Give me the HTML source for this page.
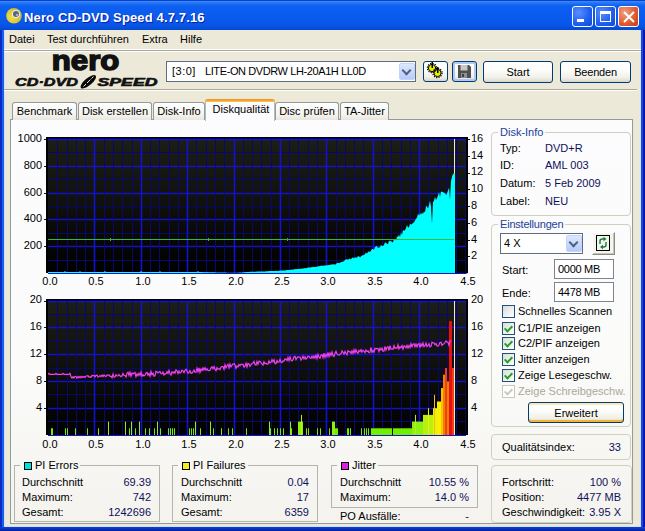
<!DOCTYPE html>
<html><head><meta charset="utf-8">
<style>
*{box-sizing:border-box}
html,body{margin:0;padding:0;width:645px;height:531px;overflow:hidden;background:#0831d9}
body{position:relative;font-family:"Liberation Sans",sans-serif;font-size:11px;color:#000}
.a{position:absolute}
.t{position:absolute;white-space:nowrap;font-size:11px;line-height:14px}
.t.r{text-align:right}
.t.c{width:40px;text-align:center}
#titlebar{position:absolute;left:0;top:0;width:645px;height:30px;
 background:linear-gradient(#0a3ed0 0px,#0a3ed0 1px,#3c8cf6 1px,#2474f4 3px,#0c60f0 6px,#0a5cee 14px,#0958ec 22px,#0652e2 27px,#0448d0 30px);
 border-radius:0}
#frame{position:absolute;left:0;top:30px;width:645px;height:501px;background:linear-gradient(90deg,#0a2cc4 0,#0a2cc4 2px,#1a5ef2 2px,#1a5ef2 4px,#0a50e0 4px,#0a50e0 641px,#1a48e0 641px,#1a48e0 643px,#0818a8 643px)}
#face{position:absolute;left:4px;top:30px;width:637px;height:497px;background:#ece9d8;border-left:1px solid #d0e0fa;border-right:1px solid #d0e0fa;border-bottom:1px solid #d0e0fa}
#bottomborder{position:absolute;left:0;top:527px;width:645px;height:4px;background:linear-gradient(#1040d8,#0020a0)}
.ttl{position:absolute;left:24px;top:10px;font:bold 13px "Liberation Sans",sans-serif;color:#fff;text-shadow:1px 1px 0 #0a1e9e;letter-spacing:0.14px}
.cbtn{position:absolute;top:6px;width:21px;height:21px;border:1px solid #fff;border-radius:3px;background:radial-gradient(circle at 30% 30%,#5a8dff,#1d5ef0 60%,#1445d0)}
.cbtn.x{background:radial-gradient(circle at 30% 30%,#f0a080,#e0582e 60%,#c43c18)}
.menu{position:absolute;top:32px}
.sep{position:absolute;height:2px;border-top:1px solid #aca899;border-bottom:1px solid #fff}
.combo{position:absolute;background:#fff;border:1px solid #5e6e7e}
.ddbtn{position:absolute;border-radius:2px;background:linear-gradient(#dde8ff,#b6cbf7);border:1px solid #c3d3fd}
.ddbtn:after{content:"";position:absolute;left:3px;top:3px;width:5px;height:5px;border-right:2px solid #4d6185;border-bottom:2px solid #4d6185;transform:rotate(45deg)}
.btn{position:absolute;border:1px solid #003c74;border-radius:3px;background:linear-gradient(#fff 0,#fdfdfb 40%,#f0efe7 80%,#d8d5c8 100%);text-align:center;line-height:19px}
.tab{position:absolute;top:102px;height:18px;border:1px solid #919b9c;border-bottom:none;border-radius:3px 3px 0 0;background:linear-gradient(#fff,#f4f3ee 70%,#e8e6dc);line-height:17px;text-align:center}
.tab.sel{top:99px;height:22px;background:#fcfcfe;border-top:none;line-height:21px;border-color:#b8bcbc;padding-left:2px}
.tab.sel:before{content:"";position:absolute;left:-1px;right:-1px;top:0;height:3px;background:linear-gradient(#e68b2c,#ffc73c);border-radius:3px 3px 0 0}
#panel{position:absolute;left:10px;top:119px;width:623px;height:405px;border:1px solid #919b9c;background:linear-gradient(#fcfcfe 0,#fbfbfa 60%,#f4f3ee 100%)}
.grp{position:absolute;border:1px solid #d0d0bf;border-radius:4px}
.gt{position:absolute;background:#fbfbfb;padding:0 2px;line-height:13px;color:#22409a}
.v{color:#10105a}
.cb{position:absolute;width:13px;height:13px;border:1px solid #1c5180;background:linear-gradient(135deg,#dcdcd7,#fff)}
.cb.on:after{content:"";position:absolute;left:3px;top:1px;width:3px;height:6px;border-right:2px solid #21a121;border-bottom:2px solid #21a121;transform:rotate(45deg)}
.cb.dis{border-color:#cac8bb;background:#fff}
.cb.dis:after{content:"";position:absolute;left:3px;top:1px;width:3px;height:6px;border-right:2px solid #cac8bb;border-bottom:2px solid #cac8bb;transform:rotate(45deg)}
.edit{position:absolute;background:#fff;border:1px solid #7c848e;line-height:19px;padding-left:3px;letter-spacing:-0.3px}
.sq{display:inline-block;width:8px;height:8px;border:1px solid #000;vertical-align:-1px;margin-right:3px;margin-left:2px}
</style></head>
<body>
<div id="frame"></div>
<div id="titlebar"></div>
<div id="face"></div>
<div id="bottomborder"></div>
<!-- app icon -->
<svg class="a" style="left:0;top:0" width="26" height="30">
<defs><radialGradient id="disc" cx="0.35" cy="0.6" r="0.7"><stop offset="0" stop-color="#f0e040"/><stop offset="0.6" stop-color="#e0c838"/><stop offset="1" stop-color="#b8b050"/></radialGradient></defs>
<circle cx="14" cy="15.8" r="7.8" fill="url(#disc)"/>
<circle cx="16" cy="14" r="4" fill="#e8eef0"/>
<circle cx="16" cy="14" r="3" fill="#5a6478"/>
<circle cx="17" cy="15" r="1.3" fill="#a0b0d0"/>
</svg>
<div class="ttl">Nero CD-DVD Speed 4.7.7.16</div>
<div class="cbtn" style="left:572px"><div class="a" style="left:4px;top:12px;width:7px;height:3px;background:#fff"></div></div>
<div class="cbtn" style="left:595px"><div class="a" style="left:4px;top:4px;width:11px;height:11px;border:1px solid #fff;border-top-width:3px"></div></div>
<div class="cbtn x" style="left:618px"><svg class="a" style="left:4px;top:4px" width="12" height="12"><path d="M1,1 L11,11 M11,1 L1,11" stroke="#fff" stroke-width="2"/></svg></div>

<div class="t menu" style="left:9px">Datei</div>
<div class="t menu" style="left:47px">Test durchführen</div>
<div class="t menu" style="left:142px">Extra</div>
<div class="t menu" style="left:180px">Hilfe</div>
<div class="a" style="left:4px;top:49px;width:637px;height:3px;background:linear-gradient(#fff 0,#fff 1px,#aca899 1px,#aca899 2px,#fff 2px)"></div>

<!-- nero logo -->
<svg class="a" style="left:0;top:50px" width="165" height="40">
<text x="51.8" y="20" font-family="Liberation Sans" font-weight="bold" font-size="27.5" textLength="67.5" lengthAdjust="spacingAndGlyphs" fill="#111" stroke="#111" stroke-width="1.5">nero</text>
<text x="15" y="36" font-family="Liberation Sans" font-weight="bold" font-style="italic" font-size="11" textLength="63" lengthAdjust="spacingAndGlyphs" fill="#111" stroke="#111" stroke-width="0.6">CD·DVD</text>
<ellipse cx="88.3" cy="31.8" rx="9.6" ry="3.6" transform="rotate(-40 88.3 31.8)" fill="#0a0a0a"/>
<path d="M83.5,36.5 L86,34 M87,33 L90.5,29.5 M91.5,28.5 L93.5,26.5" stroke="#e8e8e8" stroke-width="1" fill="none"/>
<text x="97.5" y="36" font-family="Liberation Sans" font-weight="bold" font-style="italic" font-size="11" textLength="60" lengthAdjust="spacingAndGlyphs" fill="#111" stroke="#111" stroke-width="0.6">SPEED</text>
</svg>
<div class="combo" style="left:166px;top:61px;width:250px;height:21px"></div>
<div class="t" style="left:172px;top:64px;letter-spacing:0.5px">[3:0]</div><div class="t" style="left:205px;top:64px;letter-spacing:-0.4px">LITE-ON DVDRW LH-20A1H LL0D</div>
<div class="ddbtn" style="left:399px;top:63px;width:16px;height:17px"></div>

<div class="btn" style="left:423px;top:61px;width:25px;height:21px"></div>
<svg class="a" style="left:423px;top:61px" width="25" height="21">
<g stroke="#000" stroke-width="1" fill="#e8f000">
<circle cx="9" cy="7" r="3.6"/><circle cx="14.5" cy="12" r="3.6"/>
</g>
<g fill="#000"><rect x="8.5" y="1" width="1.5" height="6"/><rect x="14" y="6" width="1.5" height="6"/></g>
<g stroke="#000" stroke-width="1.2" stroke-dasharray="1.2 1.2" fill="none"><circle cx="9" cy="7" r="4.6"/><circle cx="14.5" cy="12" r="4.6"/></g>
</svg>
<div class="btn" style="left:452px;top:61px;width:25px;height:21px;box-shadow:inset 0 0 0 2px #b0c8f4"></div>
<svg class="a" style="left:452px;top:61px" width="25" height="21">
<path d="M6,4 H17 L19,6 V17 H6 Z" fill="#505050"/>
<rect x="8.5" y="4" width="7" height="5.5" fill="#c8c8c8"/>
<rect x="9" y="12" width="6" height="5" fill="#909090"/>
<rect x="10" y="13" width="2" height="3" fill="#404040"/>
</svg>
<div class="btn" style="left:483px;top:61px;width:70px;height:22px;line-height:21px">Start</div>
<div class="btn" style="left:560px;top:61px;width:71px;height:22px;line-height:21px;letter-spacing:-0.2px">Beenden</div>
<div class="sep" style="left:4px;top:89px;width:633px"></div>

<div id="panel"></div>
<div class="tab" style="left:12px;width:65px">Benchmark</div>
<div class="tab" style="left:78px;width:74px">Disk erstellen</div>
<div class="tab" style="left:153px;width:52px">Disk-Info</div>
<div class="tab" style="left:340px;width:49px">TA-Jitter</div>
<div class="tab" style="left:275px;width:64px">Disc prüfen</div>
<div class="tab sel" style="left:205px;width:70px">Diskqualität</div>

<svg width="645" height="531" style="position:absolute;left:0;top:0">
<defs><linearGradient id="bg" x1="0" y1="0" x2="0" y2="1"><stop offset="0" stop-color="#1e1e18"/><stop offset="1" stop-color="#000000"/></linearGradient></defs>
<rect x="48" y="138.5" width="418" height="135.0" fill="url(#bg)"/>
<rect x="48" y="138" width="418" height="3" fill="#1212d0" opacity="0.2"/>
<rect x="48" y="139" width="418" height="1" fill="#1212d0"/>
<rect x="48" y="152" width="418" height="1" fill="#08086c"/>
<rect x="48" y="165" width="418" height="3" fill="#1212d0" opacity="0.2"/>
<rect x="48" y="166" width="418" height="1" fill="#1212d0"/>
<rect x="48" y="179" width="418" height="1" fill="#08086c"/>
<rect x="48" y="192" width="418" height="3" fill="#1212d0" opacity="0.2"/>
<rect x="48" y="193" width="418" height="1" fill="#1212d0"/>
<rect x="48" y="206" width="418" height="1" fill="#08086c"/>
<rect x="48" y="218" width="418" height="3" fill="#1212d0" opacity="0.2"/>
<rect x="48" y="219" width="418" height="1" fill="#1212d0"/>
<rect x="48" y="233" width="418" height="1" fill="#08086c"/>
<rect x="48" y="245" width="418" height="3" fill="#1212d0" opacity="0.2"/>
<rect x="48" y="246" width="418" height="1" fill="#1212d0"/>
<rect x="48" y="260" width="418" height="1" fill="#08086c"/>
<rect x="48" y="273" width="418" height="1" fill="#1212d0"/>
<rect x="57" y="139.5" width="1" height="134.0" fill="#08086e"/>
<rect x="67" y="139.5" width="1" height="134.0" fill="#08086e"/>
<rect x="76" y="139.5" width="1" height="134.0" fill="#08086e"/>
<rect x="85" y="139.5" width="1" height="134.0" fill="#08086e"/>
<rect x="93" y="139.5" width="3" height="134.0" fill="#1212d0" opacity="0.3"/>
<rect x="94" y="139.5" width="1" height="134.0" fill="#1212d0"/>
<rect x="104" y="139.5" width="1" height="134.0" fill="#08086e"/>
<rect x="113" y="139.5" width="1" height="134.0" fill="#08086e"/>
<rect x="122" y="139.5" width="1" height="134.0" fill="#08086e"/>
<rect x="132" y="139.5" width="1" height="134.0" fill="#08086e"/>
<rect x="140" y="139.5" width="3" height="134.0" fill="#1212d0" opacity="0.3"/>
<rect x="141" y="139.5" width="1" height="134.0" fill="#1212d0"/>
<rect x="150" y="139.5" width="1" height="134.0" fill="#08086e"/>
<rect x="159" y="139.5" width="1" height="134.0" fill="#08086e"/>
<rect x="169" y="139.5" width="1" height="134.0" fill="#08086e"/>
<rect x="178" y="139.5" width="1" height="134.0" fill="#08086e"/>
<rect x="186" y="139.5" width="3" height="134.0" fill="#1212d0" opacity="0.3"/>
<rect x="187" y="139.5" width="1" height="134.0" fill="#1212d0"/>
<rect x="196" y="139.5" width="1" height="134.0" fill="#08086e"/>
<rect x="206" y="139.5" width="1" height="134.0" fill="#08086e"/>
<rect x="215" y="139.5" width="1" height="134.0" fill="#08086e"/>
<rect x="224" y="139.5" width="1" height="134.0" fill="#08086e"/>
<rect x="233" y="139.5" width="3" height="134.0" fill="#1212d0" opacity="0.3"/>
<rect x="234" y="139.5" width="1" height="134.0" fill="#1212d0"/>
<rect x="243" y="139.5" width="1" height="134.0" fill="#08086e"/>
<rect x="252" y="139.5" width="1" height="134.0" fill="#08086e"/>
<rect x="261" y="139.5" width="1" height="134.0" fill="#08086e"/>
<rect x="271" y="139.5" width="1" height="134.0" fill="#08086e"/>
<rect x="279" y="139.5" width="3" height="134.0" fill="#1212d0" opacity="0.3"/>
<rect x="280" y="139.5" width="1" height="134.0" fill="#1212d0"/>
<rect x="289" y="139.5" width="1" height="134.0" fill="#08086e"/>
<rect x="298" y="139.5" width="1" height="134.0" fill="#08086e"/>
<rect x="308" y="139.5" width="1" height="134.0" fill="#08086e"/>
<rect x="317" y="139.5" width="1" height="134.0" fill="#08086e"/>
<rect x="325" y="139.5" width="3" height="134.0" fill="#1212d0" opacity="0.3"/>
<rect x="326" y="139.5" width="1" height="134.0" fill="#1212d0"/>
<rect x="336" y="139.5" width="1" height="134.0" fill="#08086e"/>
<rect x="345" y="139.5" width="1" height="134.0" fill="#08086e"/>
<rect x="354" y="139.5" width="1" height="134.0" fill="#08086e"/>
<rect x="363" y="139.5" width="1" height="134.0" fill="#08086e"/>
<rect x="372" y="139.5" width="3" height="134.0" fill="#1212d0" opacity="0.3"/>
<rect x="373" y="139.5" width="1" height="134.0" fill="#1212d0"/>
<rect x="382" y="139.5" width="1" height="134.0" fill="#08086e"/>
<rect x="391" y="139.5" width="1" height="134.0" fill="#08086e"/>
<rect x="401" y="139.5" width="1" height="134.0" fill="#08086e"/>
<rect x="410" y="139.5" width="1" height="134.0" fill="#08086e"/>
<rect x="418" y="139.5" width="3" height="134.0" fill="#1212d0" opacity="0.3"/>
<rect x="419" y="139.5" width="1" height="134.0" fill="#1212d0"/>
<rect x="428" y="139.5" width="1" height="134.0" fill="#08086e"/>
<rect x="438" y="139.5" width="1" height="134.0" fill="#08086e"/>
<rect x="447" y="139.5" width="1" height="134.0" fill="#08086e"/>
<rect x="456" y="139.5" width="1" height="134.0" fill="#08086e"/>
<rect x="465" y="139.5" width="3" height="134.0" fill="#1212d0" opacity="0.3"/>
<rect x="466" y="139.5" width="1" height="134.0" fill="#1212d0"/>
<rect x="454" y="139" width="1" height="134" fill="#e8e8e8" />
<path d="M48,273 L48.0,272.1 L49.0,272.1 L50.0,272.0 L51.0,272.1 L52.0,272.0 L53.0,272.0 L54.0,272.1 L55.0,272.0 L56.0,272.1 L57.0,272.0 L58.0,272.1 L59.0,272.1 L60.0,272.0 L61.0,272.0 L62.0,272.1 L63.0,272.1 L64.0,272.0 L65.0,271.1 L66.0,272.0 L67.0,272.0 L68.0,271.9 L69.0,272.1 L70.0,272.0 L71.0,272.1 L72.0,272.1 L73.0,272.1 L74.0,272.1 L75.0,272.0 L76.0,272.1 L77.0,272.0 L78.0,272.0 L79.0,272.0 L80.0,271.1 L81.0,272.1 L82.0,272.1 L83.0,272.1 L84.0,272.0 L85.0,272.0 L86.0,272.1 L87.0,272.0 L88.0,272.0 L89.0,272.1 L90.0,272.0 L91.0,272.0 L92.0,272.1 L93.0,272.0 L94.0,272.0 L95.0,272.0 L96.0,272.0 L97.0,272.1 L98.0,271.9 L99.0,272.1 L100.0,272.0 L101.0,272.0 L102.0,272.1 L103.0,272.0 L104.0,272.1 L105.0,271.1 L106.0,272.0 L107.0,272.0 L108.0,272.0 L109.0,272.1 L110.0,272.0 L111.0,272.0 L112.0,272.0 L113.0,272.0 L114.0,272.0 L115.0,271.9 L116.0,272.0 L117.0,272.0 L118.0,272.1 L119.0,272.0 L120.0,272.0 L121.0,271.9 L122.0,272.0 L123.0,272.1 L124.0,272.0 L125.0,272.0 L126.0,272.1 L127.0,272.0 L128.0,272.1 L129.0,272.1 L130.0,272.1 L131.0,272.0 L132.0,272.1 L133.0,272.1 L134.0,272.0 L135.0,272.0 L136.0,272.1 L137.0,272.0 L138.0,272.0 L139.0,272.0 L140.0,272.0 L141.0,271.1 L142.0,272.1 L143.0,272.0 L144.0,272.1 L145.0,272.0 L146.0,271.9 L147.0,272.1 L148.0,272.1 L149.0,272.1 L150.0,272.1 L151.0,272.0 L152.0,272.0 L153.0,272.1 L154.0,272.1 L155.0,272.0 L156.0,272.0 L157.0,272.0 L158.0,271.9 L159.0,272.0 L160.0,271.1 L161.0,272.0 L162.0,272.0 L163.0,272.1 L164.0,272.0 L165.0,272.0 L166.0,272.0 L167.0,272.0 L168.0,272.0 L169.0,272.0 L170.0,272.1 L171.0,272.0 L172.0,272.1 L173.0,272.1 L174.0,272.1 L175.0,272.1 L176.0,272.1 L177.0,272.1 L178.0,272.1 L179.0,272.1 L180.0,272.1 L181.0,272.1 L182.0,272.1 L183.0,272.0 L184.0,272.0 L185.0,272.1 L186.0,272.1 L187.0,272.1 L188.0,272.1 L189.0,272.1 L190.0,272.0 L191.0,271.9 L192.0,272.0 L193.0,272.0 L194.0,272.1 L195.0,272.1 L196.0,272.1 L197.0,272.1 L198.0,271.1 L199.0,272.1 L200.0,272.1 L201.0,272.0 L202.0,272.1 L203.0,272.2 L204.0,272.1 L205.0,272.2 L206.0,272.2 L207.0,272.1 L208.0,272.2 L209.0,272.2 L210.0,272.3 L211.0,272.3 L212.0,272.3 L213.0,272.3 L214.0,272.3 L215.0,272.3 L216.0,272.4 L217.0,272.5 L218.0,272.4 L219.0,272.4 L220.0,272.4 L221.0,272.5 L222.0,272.5 L223.0,272.5 L224.0,272.6 L225.0,272.6 L226.0,272.6 L227.0,272.7 L228.0,272.7 L229.0,272.7 L230.0,272.7 L231.0,272.7 L232.0,272.7 L233.0,272.8 L234.0,272.8 L235.0,272.8 L236.0,272.7 L237.0,272.7 L238.0,272.7 L239.0,272.6 L240.0,272.6 L241.0,272.5 L242.0,272.4 L243.0,272.3 L244.0,272.2 L245.0,272.2 L246.0,272.1 L247.0,272.0 L248.0,272.1 L249.0,271.9 L250.0,271.8 L251.0,271.8 L252.0,271.8 L253.0,271.8 L254.0,271.8 L255.0,271.7 L256.0,271.7 L257.0,271.6 L258.0,271.5 L259.0,271.6 L260.0,271.6 L261.0,271.4 L262.0,271.4 L263.0,271.5 L264.0,271.5 L265.0,271.4 L266.0,271.2 L267.0,271.2 L268.0,271.3 L269.0,271.1 L270.0,271.0 L271.0,271.1 L272.0,271.1 L273.0,271.1 L274.0,271.1 L275.0,271.1 L276.0,270.8 L277.0,270.9 L278.0,270.9 L279.0,270.7 L280.0,270.8 L281.0,270.6 L282.0,270.5 L283.0,270.6 L284.0,270.5 L285.0,270.4 L286.0,270.3 L287.0,270.1 L288.0,270.1 L289.0,270.0 L290.0,270.0 L291.0,269.5 L292.0,269.7 L293.0,269.5 L294.0,269.4 L295.0,269.1 L296.0,269.3 L297.0,268.9 L298.0,269.0 L299.0,268.9 L300.0,268.8 L301.0,269.0 L302.0,268.6 L303.0,268.6 L304.0,268.6 L305.0,267.9 L306.0,268.2 L307.0,267.9 L308.0,267.6 L309.0,267.6 L310.0,267.6 L311.0,267.3 L312.0,267.2 L313.0,266.8 L314.0,267.2 L315.0,266.8 L316.0,266.9 L317.0,266.7 L318.0,266.2 L319.0,266.3 L320.0,266.1 L321.0,265.8 L322.0,265.5 L323.0,265.9 L324.0,265.6 L325.0,265.6 L326.0,265.5 L327.0,265.2 L328.0,265.3 L329.0,265.1 L330.0,265.1 L331.0,264.5 L332.0,264.6 L333.0,264.3 L334.0,264.2 L335.0,264.8 L336.0,264.0 L337.0,263.1 L338.0,262.8 L339.0,263.2 L340.0,262.8 L341.0,261.9 L342.0,262.0 L343.0,261.4 L344.0,261.2 L345.0,259.8 L346.0,259.4 L347.0,259.0 L348.0,260.0 L349.0,258.8 L350.0,258.7 L351.0,259.4 L352.0,257.8 L353.0,257.5 L354.0,258.6 L355.0,257.0 L356.0,257.8 L357.0,257.4 L358.0,256.2 L359.0,256.3 L360.0,257.4 L361.0,256.3 L362.0,255.5 L363.0,255.3 L364.0,255.0 L365.0,254.1 L366.0,252.5 L367.0,253.7 L368.0,251.7 L369.0,251.4 L370.0,251.9 L371.0,250.5 L372.0,249.0 L373.0,248.9 L374.0,249.9 L375.0,246.7 L376.0,246.8 L377.0,245.8 L378.0,248.2 L379.0,247.3 L380.0,247.6 L381.0,244.7 L382.0,246.0 L383.0,246.1 L384.0,244.7 L385.0,242.6 L386.0,242.4 L387.0,244.0 L388.0,243.9 L389.0,240.6 L390.0,241.4 L391.0,240.4 L392.0,242.4 L393.0,242.0 L394.0,239.0 L395.0,239.6 L396.0,240.6 L397.0,236.5 L398.0,236.7 L399.0,234.8 L400.0,237.0 L401.0,232.2 L402.0,234.9 L403.0,229.9 L404.0,230.8 L405.0,230.3 L406.0,228.1 L407.0,224.9 L408.0,227.5 L409.0,227.2 L410.0,223.8 L411.0,224.4 L412.0,224.2 L413.0,222.8 L414.0,222.5 L415.0,220.5 L416.0,218.8 L417.0,217.8 L418.0,213.5 L419.0,215.8 L420.0,213.2 L421.0,214.7 L422.0,212.5 L423.0,214.1 L424.0,211.5 L425.0,212.4 L426.0,205.9 L427.0,206.4 L428.0,208.4 L429.0,205.2 L430.0,200.4 L431.0,206.5 L432.0,223.9 L433.0,202.0 L434.0,200.7 L435.0,196.8 L436.0,199.9 L437.0,198.0 L438.0,195.5 L439.0,191.9 L440.0,197.0 L441.0,191.6 L442.0,191.9 L443.0,191.7 L444.0,193.1 L445.0,192.9 L446.0,195.0 L447.0,193.4 L448.0,190.4 L449.0,187.8 L450.0,199.8 L451.0,181.1 L452.0,176.7 L453.0,174.0 L454.0,173.5 L455,173.5 L455,273Z" fill="#00ffff"/><line x1="48" x2="454" y1="239.5" y2="239.5" stroke="#38b838" stroke-width="1"/><rect x="110" y="238" width="1" height="3" fill="#38b838"/><rect x="208" y="238" width="1" height="3" fill="#38b838"/><rect x="287" y="238" width="1" height="3" fill="#38b838"/>
<rect x="46" y="137" width="2" height="136" fill="#000"/>
<rect x="46" y="137" width="422" height="1" fill="#000"/>
<rect x="48" y="138" width="418" height="1" fill="#06064a"/>
<rect x="466" y="137" width="2" height="136" fill="#000"/>
<rect x="48" y="300.0" width="418" height="135.0" fill="url(#bg)"/>
<rect x="48" y="300" width="418" height="3" fill="#1212d0" opacity="0.2"/>
<rect x="48" y="301" width="418" height="1" fill="#1212d0"/>
<rect x="48" y="314" width="418" height="1" fill="#08086c"/>
<rect x="48" y="326" width="418" height="3" fill="#1212d0" opacity="0.2"/>
<rect x="48" y="327" width="418" height="1" fill="#1212d0"/>
<rect x="48" y="341" width="418" height="1" fill="#08086c"/>
<rect x="48" y="353" width="418" height="3" fill="#1212d0" opacity="0.2"/>
<rect x="48" y="354" width="418" height="1" fill="#1212d0"/>
<rect x="48" y="368" width="418" height="1" fill="#08086c"/>
<rect x="48" y="380" width="418" height="3" fill="#1212d0" opacity="0.2"/>
<rect x="48" y="381" width="418" height="1" fill="#1212d0"/>
<rect x="48" y="394" width="418" height="1" fill="#08086c"/>
<rect x="48" y="407" width="418" height="3" fill="#1212d0" opacity="0.2"/>
<rect x="48" y="408" width="418" height="1" fill="#1212d0"/>
<rect x="48" y="421" width="418" height="1" fill="#08086c"/>
<rect x="48" y="435" width="418" height="1" fill="#1212d0"/>
<rect x="57" y="301.0" width="1" height="134.0" fill="#08086e"/>
<rect x="67" y="301.0" width="1" height="134.0" fill="#08086e"/>
<rect x="76" y="301.0" width="1" height="134.0" fill="#08086e"/>
<rect x="85" y="301.0" width="1" height="134.0" fill="#08086e"/>
<rect x="93" y="301.0" width="3" height="134.0" fill="#1212d0" opacity="0.3"/>
<rect x="94" y="301.0" width="1" height="134.0" fill="#1212d0"/>
<rect x="104" y="301.0" width="1" height="134.0" fill="#08086e"/>
<rect x="113" y="301.0" width="1" height="134.0" fill="#08086e"/>
<rect x="122" y="301.0" width="1" height="134.0" fill="#08086e"/>
<rect x="132" y="301.0" width="1" height="134.0" fill="#08086e"/>
<rect x="140" y="301.0" width="3" height="134.0" fill="#1212d0" opacity="0.3"/>
<rect x="141" y="301.0" width="1" height="134.0" fill="#1212d0"/>
<rect x="150" y="301.0" width="1" height="134.0" fill="#08086e"/>
<rect x="159" y="301.0" width="1" height="134.0" fill="#08086e"/>
<rect x="169" y="301.0" width="1" height="134.0" fill="#08086e"/>
<rect x="178" y="301.0" width="1" height="134.0" fill="#08086e"/>
<rect x="186" y="301.0" width="3" height="134.0" fill="#1212d0" opacity="0.3"/>
<rect x="187" y="301.0" width="1" height="134.0" fill="#1212d0"/>
<rect x="196" y="301.0" width="1" height="134.0" fill="#08086e"/>
<rect x="206" y="301.0" width="1" height="134.0" fill="#08086e"/>
<rect x="215" y="301.0" width="1" height="134.0" fill="#08086e"/>
<rect x="224" y="301.0" width="1" height="134.0" fill="#08086e"/>
<rect x="233" y="301.0" width="3" height="134.0" fill="#1212d0" opacity="0.3"/>
<rect x="234" y="301.0" width="1" height="134.0" fill="#1212d0"/>
<rect x="243" y="301.0" width="1" height="134.0" fill="#08086e"/>
<rect x="252" y="301.0" width="1" height="134.0" fill="#08086e"/>
<rect x="261" y="301.0" width="1" height="134.0" fill="#08086e"/>
<rect x="271" y="301.0" width="1" height="134.0" fill="#08086e"/>
<rect x="279" y="301.0" width="3" height="134.0" fill="#1212d0" opacity="0.3"/>
<rect x="280" y="301.0" width="1" height="134.0" fill="#1212d0"/>
<rect x="289" y="301.0" width="1" height="134.0" fill="#08086e"/>
<rect x="298" y="301.0" width="1" height="134.0" fill="#08086e"/>
<rect x="308" y="301.0" width="1" height="134.0" fill="#08086e"/>
<rect x="317" y="301.0" width="1" height="134.0" fill="#08086e"/>
<rect x="325" y="301.0" width="3" height="134.0" fill="#1212d0" opacity="0.3"/>
<rect x="326" y="301.0" width="1" height="134.0" fill="#1212d0"/>
<rect x="336" y="301.0" width="1" height="134.0" fill="#08086e"/>
<rect x="345" y="301.0" width="1" height="134.0" fill="#08086e"/>
<rect x="354" y="301.0" width="1" height="134.0" fill="#08086e"/>
<rect x="363" y="301.0" width="1" height="134.0" fill="#08086e"/>
<rect x="372" y="301.0" width="3" height="134.0" fill="#1212d0" opacity="0.3"/>
<rect x="373" y="301.0" width="1" height="134.0" fill="#1212d0"/>
<rect x="382" y="301.0" width="1" height="134.0" fill="#08086e"/>
<rect x="391" y="301.0" width="1" height="134.0" fill="#08086e"/>
<rect x="401" y="301.0" width="1" height="134.0" fill="#08086e"/>
<rect x="410" y="301.0" width="1" height="134.0" fill="#08086e"/>
<rect x="418" y="301.0" width="3" height="134.0" fill="#1212d0" opacity="0.3"/>
<rect x="419" y="301.0" width="1" height="134.0" fill="#1212d0"/>
<rect x="428" y="301.0" width="1" height="134.0" fill="#08086e"/>
<rect x="438" y="301.0" width="1" height="134.0" fill="#08086e"/>
<rect x="447" y="301.0" width="1" height="134.0" fill="#08086e"/>
<rect x="456" y="301.0" width="1" height="134.0" fill="#08086e"/>
<rect x="465" y="301.0" width="3" height="134.0" fill="#1212d0" opacity="0.3"/>
<rect x="466" y="301.0" width="1" height="134.0" fill="#1212d0"/>
<rect x="454" y="301" width="1" height="134" fill="#e8e8e8" />
<rect x="51" y="428.3" width="1" height="6.7" fill="#70f000"/>
<rect x="52" y="428.3" width="1" height="6.7" fill="#70f000"/>
<rect x="65" y="428.3" width="1" height="6.7" fill="#70f000"/>
<rect x="67" y="428.3" width="1" height="6.7" fill="#70f000"/>
<rect x="75" y="428.3" width="1" height="6.7" fill="#70f000"/>
<rect x="87" y="428.3" width="1" height="6.7" fill="#70f000"/>
<rect x="98" y="428.3" width="1" height="6.7" fill="#70f000"/>
<rect x="108" y="421.6" width="1" height="13.4" fill="#90f010"/>
<rect x="125" y="421.6" width="1" height="13.4" fill="#90f010"/>
<rect x="129" y="428.3" width="1" height="6.7" fill="#70f000"/>
<rect x="131" y="421.6" width="1" height="13.4" fill="#90f010"/>
<rect x="135" y="428.3" width="1" height="6.7" fill="#70f000"/>
<rect x="139" y="421.6" width="1" height="13.4" fill="#90f010"/>
<rect x="145" y="428.3" width="1" height="6.7" fill="#70f000"/>
<rect x="149" y="428.3" width="1" height="6.7" fill="#70f000"/>
<rect x="154" y="428.3" width="1" height="6.7" fill="#70f000"/>
<rect x="157" y="421.6" width="1" height="13.4" fill="#90f010"/>
<rect x="160" y="428.3" width="1" height="6.7" fill="#70f000"/>
<rect x="168" y="428.3" width="1" height="6.7" fill="#70f000"/>
<rect x="170" y="428.3" width="1" height="6.7" fill="#70f000"/>
<rect x="172" y="428.3" width="1" height="6.7" fill="#70f000"/>
<rect x="174" y="428.3" width="1" height="6.7" fill="#70f000"/>
<rect x="189" y="428.3" width="1" height="6.7" fill="#70f000"/>
<rect x="191" y="428.3" width="1" height="6.7" fill="#70f000"/>
<rect x="193" y="428.3" width="1" height="6.7" fill="#70f000"/>
<rect x="195" y="421.6" width="1" height="13.4" fill="#90f010"/>
<rect x="200" y="428.3" width="1" height="6.7" fill="#70f000"/>
<rect x="210" y="421.6" width="1" height="13.4" fill="#90f010"/>
<rect x="213" y="428.3" width="1" height="6.7" fill="#70f000"/>
<rect x="221" y="428.3" width="1" height="6.7" fill="#70f000"/>
<rect x="228" y="428.3" width="1" height="6.7" fill="#70f000"/>
<rect x="232" y="428.3" width="1" height="6.7" fill="#70f000"/>
<rect x="246" y="428.3" width="1" height="6.7" fill="#70f000"/>
<rect x="269" y="421.6" width="1" height="13.4" fill="#90f010"/>
<rect x="270" y="428.3" width="1" height="6.7" fill="#70f000"/>
<rect x="274" y="428.3" width="1" height="6.7" fill="#70f000"/>
<rect x="277" y="428.3" width="1" height="6.7" fill="#70f000"/>
<rect x="280" y="428.3" width="1" height="6.7" fill="#70f000"/>
<rect x="283" y="428.3" width="1" height="6.7" fill="#70f000"/>
<rect x="290" y="421.6" width="1" height="13.4" fill="#90f010"/>
<rect x="291" y="428.3" width="1" height="6.7" fill="#70f000"/>
<rect x="298" y="421.6" width="1" height="13.4" fill="#90f010"/>
<rect x="299" y="421.6" width="1" height="13.4" fill="#90f010"/>
<rect x="300" y="421.6" width="1" height="13.4" fill="#90f010"/>
<rect x="301" y="414.9" width="1" height="20.1" fill="#b8f010"/>
<rect x="302" y="421.6" width="1" height="13.4" fill="#90f010"/>
<rect x="306" y="428.3" width="1" height="6.7" fill="#70f000"/>
<rect x="308" y="428.3" width="1" height="6.7" fill="#70f000"/>
<rect x="317" y="428.3" width="1" height="6.7" fill="#70f000"/>
<rect x="320" y="428.3" width="1" height="6.7" fill="#70f000"/>
<rect x="329" y="428.3" width="1" height="6.7" fill="#70f000"/>
<rect x="332" y="421.6" width="1" height="13.4" fill="#90f010"/>
<rect x="333" y="421.6" width="1" height="13.4" fill="#90f010"/>
<rect x="334" y="421.6" width="1" height="13.4" fill="#90f010"/>
<rect x="335" y="428.3" width="1" height="6.7" fill="#70f000"/>
<rect x="336" y="428.3" width="1" height="6.7" fill="#70f000"/>
<rect x="337" y="428.3" width="1" height="6.7" fill="#70f000"/>
<rect x="347" y="428.3" width="1" height="6.7" fill="#70f000"/>
<rect x="348" y="428.3" width="1" height="6.7" fill="#70f000"/>
<rect x="350" y="428.3" width="1" height="6.7" fill="#70f000"/>
<rect x="361" y="428.3" width="1" height="6.7" fill="#70f000"/>
<rect x="364" y="428.3" width="1" height="6.7" fill="#70f000"/>
<rect x="366" y="428.3" width="1" height="6.7" fill="#70f000"/>
<rect x="368" y="428.3" width="1" height="6.7" fill="#70f000"/>
<rect x="371" y="428.3" width="1" height="6.7" fill="#70f000"/>
<rect x="372" y="428.3" width="1" height="6.7" fill="#70f000"/>
<rect x="373" y="428.3" width="1" height="6.7" fill="#70f000"/>
<rect x="374" y="428.3" width="1" height="6.7" fill="#70f000"/>
<rect x="375" y="428.3" width="1" height="6.7" fill="#70f000"/>
<rect x="376" y="428.3" width="1" height="6.7" fill="#70f000"/>
<rect x="377" y="428.3" width="1" height="6.7" fill="#70f000"/>
<rect x="378" y="428.3" width="1" height="6.7" fill="#70f000"/>
<rect x="379" y="428.3" width="1" height="6.7" fill="#70f000"/>
<rect x="380" y="428.3" width="1" height="6.7" fill="#70f000"/>
<rect x="381" y="428.3" width="1" height="6.7" fill="#70f000"/>
<rect x="382" y="428.3" width="1" height="6.7" fill="#70f000"/>
<rect x="383" y="428.3" width="1" height="6.7" fill="#70f000"/>
<rect x="384" y="428.3" width="1" height="6.7" fill="#70f000"/>
<rect x="385" y="428.3" width="1" height="6.7" fill="#70f000"/>
<rect x="386" y="428.3" width="1" height="6.7" fill="#70f000"/>
<rect x="387" y="428.3" width="1" height="6.7" fill="#70f000"/>
<rect x="388" y="428.3" width="1" height="6.7" fill="#70f000"/>
<rect x="389" y="428.3" width="1" height="6.7" fill="#70f000"/>
<rect x="390" y="428.3" width="1" height="6.7" fill="#70f000"/>
<rect x="391" y="428.3" width="1" height="6.7" fill="#70f000"/>
<rect x="393" y="428.3" width="1" height="6.7" fill="#70f000"/>
<rect x="394" y="428.3" width="1" height="6.7" fill="#70f000"/>
<rect x="395" y="428.3" width="1" height="6.7" fill="#70f000"/>
<rect x="396" y="428.3" width="1" height="6.7" fill="#70f000"/>
<rect x="397" y="428.3" width="1" height="6.7" fill="#70f000"/>
<rect x="398" y="428.3" width="1" height="6.7" fill="#70f000"/>
<rect x="399" y="428.3" width="1" height="6.7" fill="#70f000"/>
<rect x="400" y="428.3" width="1" height="6.7" fill="#70f000"/>
<rect x="401" y="428.3" width="1" height="6.7" fill="#70f000"/>
<rect x="402" y="428.3" width="1" height="6.7" fill="#70f000"/>
<rect x="403" y="428.3" width="1" height="6.7" fill="#70f000"/>
<rect x="404" y="428.3" width="1" height="6.7" fill="#70f000"/>
<rect x="405" y="428.3" width="1" height="6.7" fill="#70f000"/>
<rect x="406" y="428.3" width="1" height="6.7" fill="#70f000"/>
<rect x="407" y="428.3" width="1" height="6.7" fill="#70f000"/>
<rect x="408" y="428.3" width="1" height="6.7" fill="#70f000"/>
<rect x="409" y="428.3" width="1" height="6.7" fill="#70f000"/>
<rect x="410" y="428.3" width="1" height="6.7" fill="#70f000"/>
<rect x="411" y="428.3" width="1" height="6.7" fill="#70f000"/>
<rect x="412" y="421.6" width="1" height="13.4" fill="#90f010"/>
<rect x="413" y="421.6" width="1" height="13.4" fill="#90f010"/>
<rect x="414" y="421.6" width="1" height="13.4" fill="#90f010"/>
<rect x="415" y="414.9" width="1" height="20.1" fill="#b8f010"/>
<rect x="416" y="421.6" width="1" height="13.4" fill="#90f010"/>
<rect x="417" y="421.6" width="1" height="13.4" fill="#90f010"/>
<rect x="418" y="421.6" width="1" height="13.4" fill="#90f010"/>
<rect x="419" y="421.6" width="1" height="13.4" fill="#90f010"/>
<rect x="420" y="421.6" width="1" height="13.4" fill="#90f010"/>
<rect x="421" y="421.6" width="1" height="13.4" fill="#90f010"/>
<rect x="422" y="421.6" width="1" height="13.4" fill="#90f010"/>
<rect x="423" y="414.9" width="1" height="20.1" fill="#b8f010"/>
<rect x="424" y="414.9" width="1" height="20.1" fill="#b8f010"/>
<rect x="425" y="414.9" width="1" height="20.1" fill="#b8f010"/>
<rect x="426" y="414.9" width="1" height="20.1" fill="#b8f010"/>
<rect x="427" y="414.9" width="1" height="20.1" fill="#b8f010"/>
<rect x="428" y="408.2" width="1" height="26.8" fill="#e8f010"/>
<rect x="429" y="414.9" width="1" height="20.1" fill="#b8f010"/>
<rect x="430" y="414.9" width="1" height="20.1" fill="#b8f010"/>
<rect x="431" y="414.9" width="1" height="20.1" fill="#b8f010"/>
<rect x="432" y="414.9" width="1" height="20.1" fill="#b8f010"/>
<rect x="433" y="408.2" width="1" height="26.8" fill="#e8f010"/>
<rect x="434" y="394.8" width="1" height="40.2" fill="#f8c000"/>
<rect x="435" y="408.2" width="1" height="26.8" fill="#e8f010"/>
<rect x="436" y="408.2" width="1" height="26.8" fill="#e8f010"/>
<rect x="437" y="401.5" width="1" height="33.5" fill="#f8f000"/>
<rect x="438" y="401.5" width="1" height="33.5" fill="#f8f000"/>
<rect x="439" y="401.5" width="1" height="33.5" fill="#f8f000"/>
<rect x="440" y="401.5" width="1" height="33.5" fill="#f8f000"/>
<rect x="441" y="388.1" width="1" height="46.9" fill="#f8c000"/>
<rect x="442" y="388.1" width="1" height="46.9" fill="#f8c000"/>
<rect x="443" y="374.7" width="1" height="60.3" fill="#f08000"/>
<rect x="444" y="374.7" width="1" height="60.3" fill="#f08000"/>
<rect x="445" y="368.0" width="1" height="67.0" fill="#f04010"/>
<rect x="446" y="368.0" width="1" height="67.0" fill="#f04010"/>
<rect x="447" y="381.4" width="1" height="53.6" fill="#f08000"/>
<rect x="448" y="381.4" width="1" height="53.6" fill="#f08000"/>
<rect x="449" y="321.1" width="1" height="113.9" fill="#e81010"/>
<rect x="450" y="321.1" width="1" height="113.9" fill="#e81010"/>
<rect x="451" y="321.1" width="1" height="113.9" fill="#e81010"/>
<rect x="452" y="368.0" width="1" height="67.0" fill="#f04010"/>
<rect x="453" y="368.0" width="1" height="67.0" fill="#f04010"/><path d="M48.0,374.4 L49.0,373.4 L50.0,374.4 L51.0,374.4 L52.0,374.4 L53.0,374.4 L54.0,374.4 L55.0,374.4 L56.0,373.4 L57.0,374.4 L58.0,374.4 L59.0,374.4 L60.0,374.4 L61.0,374.4 L62.0,374.4 L63.0,373.4 L64.0,374.4 L65.0,374.4 L66.0,374.4 L67.0,374.4 L68.0,374.4 L69.0,374.4 L70.0,373.4 L71.0,376.7 L72.0,378.0 L73.0,376.8 L74.0,378.0 L75.0,376.3 L76.0,376.5 L77.0,378.2 L78.0,376.6 L79.0,377.7 L80.0,376.4 L81.0,377.7 L82.0,376.4 L83.0,377.5 L84.0,376.5 L85.0,377.3 L86.0,376.0 L87.0,375.9 L88.0,375.7 L89.0,377.1 L90.0,376.9 L91.0,377.2 L92.0,375.5 L93.0,375.6 L94.0,375.4 L95.0,376.9 L96.0,375.3 L97.0,375.2 L98.0,377.0 L99.0,376.8 L100.0,375.6 L101.0,376.5 L102.0,375.0 L103.0,376.6 L104.0,375.0 L105.0,376.0 L106.0,376.5 L107.0,374.9 L108.0,375.2 L109.0,375.0 L110.0,376.4 L111.0,376.2 L112.0,377.8 L113.0,374.1 L114.0,377.1 L115.0,376.9 L116.0,374.6 L117.0,376.0 L118.0,376.0 L119.0,374.6 L120.0,375.8 L121.0,376.7 L122.0,375.8 L123.0,373.4 L124.0,375.4 L125.0,375.5 L126.0,377.1 L127.0,373.3 L128.0,372.2 L129.0,375.5 L130.0,372.2 L131.0,376.2 L132.0,373.0 L133.0,373.9 L134.0,373.0 L135.0,372.5 L136.0,376.7 L137.0,374.0 L138.0,375.7 L139.0,373.3 L140.0,375.3 L141.0,372.0 L142.0,376.2 L143.0,374.8 L144.0,376.0 L145.0,375.1 L146.0,372.9 L147.0,372.4 L148.0,375.3 L149.0,373.5 L150.0,376.1 L151.0,371.5 L152.0,374.8 L153.0,373.1 L154.0,376.2 L155.0,375.8 L156.0,371.3 L157.0,372.0 L158.0,373.0 L159.0,372.1 L160.0,371.6 L161.0,373.7 L162.0,373.8 L163.0,372.0 L164.0,375.0 L165.0,373.9 L166.0,373.9 L167.0,371.7 L168.0,373.5 L169.0,370.4 L170.0,373.5 L171.0,375.1 L172.0,371.9 L173.0,373.0 L174.0,371.8 L175.0,373.2 L176.0,369.9 L177.0,370.9 L178.0,373.6 L179.0,370.9 L180.0,372.9 L181.0,372.5 L182.0,370.1 L183.0,370.9 L184.0,372.6 L185.0,370.3 L186.0,369.3 L187.0,371.0 L188.0,373.2 L189.0,372.6 L190.0,370.7 L191.0,373.3 L192.0,373.1 L193.0,371.6 L194.0,370.0 L195.0,372.4 L196.0,372.3 L197.0,368.3 L198.0,371.7 L199.0,368.0 L200.0,372.3 L201.0,368.9 L202.0,370.6 L203.0,367.8 L204.0,370.0 L205.0,367.8 L206.0,370.1 L207.0,368.8 L208.0,370.4 L209.0,370.7 L210.0,370.3 L211.0,367.9 L212.0,366.8 L213.0,368.9 L214.0,366.6 L215.0,369.2 L216.0,370.6 L217.0,367.7 L218.0,369.3 L219.0,368.7 L220.0,369.7 L221.0,366.9 L222.0,366.5 L223.0,366.6 L224.0,369.3 L225.0,364.7 L226.0,367.8 L227.0,365.7 L228.0,364.4 L229.0,367.9 L230.0,364.1 L231.0,366.9 L232.0,365.1 L233.0,363.9 L234.0,363.6 L235.0,364.9 L236.0,368.3 L237.0,366.2 L238.0,366.8 L239.0,364.5 L240.0,365.8 L241.0,364.2 L242.0,364.6 L243.0,364.3 L244.0,367.1 L245.0,366.1 L246.0,363.3 L247.0,367.0 L248.0,363.3 L249.0,363.9 L250.0,366.4 L251.0,364.5 L252.0,363.5 L253.0,363.0 L254.0,361.4 L255.0,364.6 L256.0,365.2 L257.0,361.5 L258.0,364.2 L259.0,361.2 L260.0,361.3 L261.0,362.5 L262.0,364.2 L263.0,365.1 L264.0,361.7 L265.0,363.9 L266.0,363.1 L267.0,364.2 L268.0,364.1 L269.0,360.9 L270.0,363.0 L271.0,362.2 L272.0,359.6 L273.0,361.9 L274.0,359.8 L275.0,363.7 L276.0,363.6 L277.0,360.5 L278.0,362.3 L279.0,362.1 L280.0,359.4 L281.0,362.3 L282.0,362.6 L283.0,360.9 L284.0,361.1 L285.0,358.9 L286.0,359.1 L287.0,360.6 L288.0,357.4 L289.0,360.6 L290.0,356.9 L291.0,360.1 L292.0,360.9 L293.0,359.6 L294.0,356.8 L295.0,356.4 L296.0,359.7 L297.0,357.8 L298.0,356.8 L299.0,357.2 L300.0,356.9 L301.0,360.1 L302.0,358.5 L303.0,356.1 L304.0,358.9 L305.0,356.8 L306.0,359.1 L307.0,358.1 L308.0,356.2 L309.0,356.3 L310.0,357.8 L311.0,358.4 L312.0,356.2 L313.0,358.2 L314.0,355.9 L315.0,358.2 L316.0,355.3 L317.0,358.6 L318.0,354.4 L319.0,357.1 L320.0,358.3 L321.0,354.9 L322.0,354.7 L323.0,357.7 L324.0,353.1 L325.0,357.4 L326.0,354.3 L327.0,356.4 L328.0,352.4 L329.0,356.4 L330.0,353.1 L331.0,355.4 L332.0,351.9 L333.0,355.6 L334.0,356.5 L335.0,353.3 L336.0,351.3 L337.0,354.1 L338.0,354.7 L339.0,355.1 L340.0,354.0 L341.0,354.0 L342.0,350.8 L343.0,352.2 L344.0,354.0 L345.0,351.5 L346.0,353.4 L347.0,354.8 L348.0,350.7 L349.0,351.8 L350.0,351.5 L351.0,353.5 L352.0,350.8 L353.0,353.3 L354.0,349.8 L355.0,352.8 L356.0,349.7 L357.0,352.2 L358.0,353.3 L359.0,350.4 L360.0,351.6 L361.0,349.6 L362.0,352.1 L363.0,350.3 L364.0,351.1 L365.0,352.6 L366.0,350.0 L367.0,351.5 L368.0,350.9 L369.0,352.7 L370.0,352.2 L371.0,347.4 L372.0,352.3 L373.0,350.4 L374.0,352.0 L375.0,348.4 L376.0,348.8 L377.0,348.4 L378.0,348.6 L379.0,351.5 L380.0,348.2 L381.0,350.0 L382.0,348.1 L383.0,351.2 L384.0,351.0 L385.0,346.5 L386.0,350.0 L387.0,347.3 L388.0,346.7 L389.0,350.5 L390.0,345.6 L391.0,349.2 L392.0,348.8 L393.0,349.4 L394.0,345.7 L395.0,348.3 L396.0,348.0 L397.0,348.3 L398.0,344.8 L399.0,349.0 L400.0,346.8 L401.0,347.7 L402.0,345.7 L403.0,349.2 L404.0,345.9 L405.0,346.3 L406.0,347.7 L407.0,345.4 L408.0,348.0 L409.0,345.5 L410.0,347.6 L411.0,343.7 L412.0,346.7 L413.0,344.2 L414.0,343.8 L415.0,346.7 L416.0,344.0 L417.0,346.8 L418.0,344.3 L419.0,343.5 L420.0,347.7 L421.0,343.8 L422.0,346.1 L423.0,343.1 L424.0,346.6 L425.0,345.7 L426.0,343.2 L427.0,346.6 L428.0,345.5 L429.0,343.7 L430.0,346.9 L431.0,346.4 L432.0,342.2 L433.0,343.0 L434.0,342.9 L435.0,344.8 L436.0,343.7 L437.0,346.0 L438.0,346.1 L439.0,344.8 L440.0,342.5 L441.0,342.2 L442.0,345.4 L443.0,344.3 L444.0,343.8 L445.0,342.5 L446.0,340.9 L447.0,342.1 L448.0,342.1 L449.0,345.4 L450.0,341.1 L451.0,340.4" fill="none" stroke="#f040f0" stroke-width="1.2"/><rect x="454" y="301" width="1" height="134" fill="#e8e8e8"/>
<rect x="46" y="299" width="2" height="136" fill="#000"/>
<rect x="46" y="299" width="422" height="1" fill="#000"/>
<rect x="48" y="300" width="418" height="1" fill="#06064a"/>
<rect x="466" y="299" width="2" height="136" fill="#000"/>
<rect x="44" y="139" width="2" height="1" fill="#101040"/>
<rect x="44" y="301" width="2" height="1" fill="#101040"/>
<rect x="44" y="166" width="2" height="1" fill="#101040"/>
<rect x="44" y="327" width="2" height="1" fill="#101040"/>
<rect x="44" y="193" width="2" height="1" fill="#101040"/>
<rect x="44" y="354" width="2" height="1" fill="#101040"/>
<rect x="44" y="219" width="2" height="1" fill="#101040"/>
<rect x="44" y="381" width="2" height="1" fill="#101040"/>
<rect x="44" y="246" width="2" height="1" fill="#101040"/>
<rect x="44" y="408" width="2" height="1" fill="#101040"/>
<rect x="468" y="139" width="2" height="1" fill="#101040"/>
<rect x="468" y="156" width="2" height="1" fill="#101040"/>
<rect x="468" y="173" width="2" height="1" fill="#101040"/>
<rect x="468" y="189" width="2" height="1" fill="#101040"/>
<rect x="468" y="206" width="2" height="1" fill="#101040"/>
<rect x="468" y="223" width="2" height="1" fill="#101040"/>
<rect x="468" y="240" width="2" height="1" fill="#101040"/>
<rect x="468" y="256" width="2" height="1" fill="#101040"/>
</svg>
<div class="t r" style="right:603px;top:131px">1000</div>
<div class="t r" style="right:603px;top:158px">800</div>
<div class="t r" style="right:603px;top:185px">600</div>
<div class="t r" style="right:603px;top:211px">400</div>
<div class="t r" style="right:603px;top:238px">200</div>
<div class="t" style="left:471px;top:131px">16</div>
<div class="t" style="left:471px;top:148px">14</div>
<div class="t" style="left:471px;top:164px">12</div>
<div class="t" style="left:471px;top:181px">10</div>
<div class="t" style="left:471px;top:198px">8</div>
<div class="t" style="left:471px;top:215px">6</div>
<div class="t" style="left:471px;top:232px">4</div>
<div class="t" style="left:471px;top:248px">2</div>
<div class="t r" style="right:603px;top:292px">20</div>
<div class="t r" style="right:603px;top:319px">16</div>
<div class="t r" style="right:603px;top:346px">12</div>
<div class="t r" style="right:603px;top:373px">8</div>
<div class="t r" style="right:603px;top:400px">4</div>
<div class="t" style="left:471px;top:292px">20</div>
<div class="t" style="left:471px;top:319px">16</div>
<div class="t" style="left:471px;top:346px">12</div>
<div class="t" style="left:471px;top:373px">8</div>
<div class="t" style="left:471px;top:400px">4</div>
<div class="t c" style="left:30px;top:274px">0.0</div>
<div class="t c" style="left:30px;top:437px">0.0</div>
<div class="t c" style="left:76px;top:274px">0.5</div>
<div class="t c" style="left:76px;top:437px">0.5</div>
<div class="t c" style="left:123px;top:274px">1.0</div>
<div class="t c" style="left:123px;top:437px">1.0</div>
<div class="t c" style="left:169px;top:274px">1.5</div>
<div class="t c" style="left:169px;top:437px">1.5</div>
<div class="t c" style="left:216px;top:274px">2.0</div>
<div class="t c" style="left:216px;top:437px">2.0</div>
<div class="t c" style="left:262px;top:274px">2.5</div>
<div class="t c" style="left:262px;top:437px">2.5</div>
<div class="t c" style="left:308px;top:274px">3.0</div>
<div class="t c" style="left:308px;top:437px">3.0</div>
<div class="t c" style="left:355px;top:274px">3.5</div>
<div class="t c" style="left:355px;top:437px">3.5</div>
<div class="t c" style="left:401px;top:274px">4.0</div>
<div class="t c" style="left:401px;top:437px">4.0</div>
<div class="t c" style="left:448px;top:274px">4.5</div>
<div class="t c" style="left:448px;top:437px">4.5</div>

<!-- right panel -->
<div class="grp" style="left:491px;top:132px;width:140px;height:84px"></div>
<div class="gt" style="left:498px;top:126px;background:#fcfcfd">Disk-Info</div>
<div class="t" style="left:500px;top:141px">Typ:</div><div class="t v" style="left:545px;top:141px">DVD+R</div>
<div class="t" style="left:500px;top:158px">ID:</div><div class="t v" style="left:545px;top:158px">AML 003</div>
<div class="t" style="left:500px;top:176px">Datum:</div><div class="t v" style="left:545px;top:176px">5 Feb 2009</div>
<div class="t" style="left:500px;top:194px">Label:</div><div class="t v" style="left:545px;top:194px">NEU</div>

<div class="grp" style="left:491px;top:224px;width:140px;height:203px"></div>
<div class="gt" style="left:498px;top:218px;background:#fbfbfb;letter-spacing:-0.2px">Einstellungen</div>
<div class="combo" style="left:500px;top:233px;width:83px;height:21px"></div>
<div class="t" style="left:504px;top:236px">4 X</div>
<div class="ddbtn" style="left:566px;top:235px;width:16px;height:17px"></div>
<div class="a" style="left:592px;top:232px;width:23px;height:23px;background:#f6f5f0;border-top:1px solid #fff;border-left:1px solid #fff;border-right:1px solid #8c8c80;border-bottom:1px solid #8c8c80;box-shadow:inset -1px -1px 0 #c8c6b8"></div>
<svg class="a" style="left:592px;top:232px" width="23" height="23">
<rect x="4.5" y="3.5" width="13" height="15" fill="#eef8ee" stroke="#000" stroke-width="1"/>
<path d="M8,12 V9 Q8,7 10.5,7 H12" stroke="#207838" stroke-width="1.4" fill="none"/>
<path d="M11.5,4.8 L14.5,7 L11.5,9.2 Z" fill="#207838"/>
<path d="M14,10 V13 Q14,15 11.5,15 H10.5" stroke="#207838" stroke-width="1.4" fill="none"/>
<path d="M11,12.8 L8,15 L11,17.2 Z" fill="#207838"/>
</svg>
<div class="t" style="left:502px;top:263px">Start:</div>
<div class="edit" style="left:554px;top:259px;width:60px;height:20px;line-height:18px">0000 MB</div>
<div class="t" style="left:502px;top:286px">Ende:</div>
<div class="edit" style="left:554px;top:282px;width:60px;height:20px;line-height:18px">4478 MB</div>
<div class="cb" style="left:502px;top:305px"></div><div class="t" style="left:518px;top:304px">Schnelles Scannen</div>
<div class="cb on" style="left:502px;top:322px"></div><div class="t" style="left:518px;top:321px">C1/PIE anzeigen</div>
<div class="cb on" style="left:502px;top:337px"></div><div class="t" style="left:518px;top:336px">C2/PIF anzeigen</div>
<div class="cb on" style="left:502px;top:353px"></div><div class="t" style="left:518px;top:352px">Jitter anzeigen</div>
<div class="cb on" style="left:502px;top:369px"></div><div class="t" style="left:518px;top:368px">Zeige Lesegeschw.</div>
<div class="cb dis" style="left:502px;top:385px"></div><div class="t" style="left:518px;top:384px;color:#aca899">Zeige Schreibgeschw.</div>
<div class="btn" style="left:528px;top:402px;width:96px;height:21px;line-height:20px;border-color:#003c74;box-shadow:inset 0 -2px 0 #f8b330,inset 0 2px 0 #fce8b0">Erweitert</div>

<div class="grp" style="left:491px;top:434px;width:140px;height:26px"></div>
<div class="t" style="left:502px;top:440px">Qualitätsindex:</div><div class="t v" style="left:621px;top:440px;transform:translateX(-100%)">33</div>

<div class="grp" style="left:491px;top:465px;width:141px;height:58px"></div>
<div class="t" style="left:502px;top:475px">Fortschritt:</div><div class="t v" style="left:621px;top:475px;transform:translateX(-100%)">100 %</div>
<div class="t" style="left:502px;top:490px">Position:</div><div class="t v" style="left:621px;top:490px;transform:translateX(-100%)">4477 MB</div>
<div class="t" style="left:502px;top:505px">Geschwindigkeit:</div><div class="t v" style="left:621px;top:505px;transform:translateX(-100%)">3.95 X</div>

<!-- bottom stats -->
<div class="grp" style="left:14px;top:465px;width:146px;height:57px;border-radius:0;border-color:#b4b4aa"></div>
<div class="gt" style="left:20px;top:459px;color:#000;background:#f6f6f3"><span class="sq" style="background:#00e0e0"></span>PI Errors</div>
<div class="t" style="left:22px;top:475px">Durchschnitt</div><div class="t v" style="left:151px;top:475px;transform:translateX(-100%)">69.39</div>
<div class="t" style="left:22px;top:490px">Maximum:</div><div class="t v" style="left:151px;top:490px;transform:translateX(-100%)">742</div>
<div class="t" style="left:22px;top:505px">Gesamt:</div><div class="t v" style="left:151px;top:505px;transform:translateX(-100%)">1242696</div>

<div class="grp" style="left:172px;top:465px;width:146px;height:57px;border-radius:0;border-color:#b4b4aa"></div>
<div class="gt" style="left:178px;top:459px;color:#000;background:#f6f6f3"><span class="sq" style="background:#f0f020"></span>PI Failures</div>
<div class="t" style="left:181px;top:475px">Durchschnitt</div><div class="t v" style="left:309px;top:475px;transform:translateX(-100%)">0.04</div>
<div class="t" style="left:181px;top:490px">Maximum:</div><div class="t v" style="left:309px;top:490px;transform:translateX(-100%)">17</div>
<div class="t" style="left:181px;top:505px">Gesamt:</div><div class="t v" style="left:309px;top:505px;transform:translateX(-100%)">6359</div>

<div class="grp" style="left:331px;top:465px;width:147px;height:43px;border-radius:0;border-color:#b4b4aa"></div>
<div class="gt" style="left:337px;top:459px;color:#000;background:#f6f6f3"><span class="sq" style="background:#e020e0"></span>Jitter</div>
<div class="t" style="left:340px;top:475px">Durchschnitt</div><div class="t v" style="left:469px;top:475px;transform:translateX(-100%)">10.55 %</div>
<div class="t" style="left:340px;top:490px">Maximum:</div><div class="t v" style="left:469px;top:490px;transform:translateX(-100%)">14.0 %</div>
<div class="t" style="left:340px;top:509px">PO Ausfälle:</div><div class="t v" style="left:469px;top:509px;transform:translateX(-100%)">-</div>
</body></html>
